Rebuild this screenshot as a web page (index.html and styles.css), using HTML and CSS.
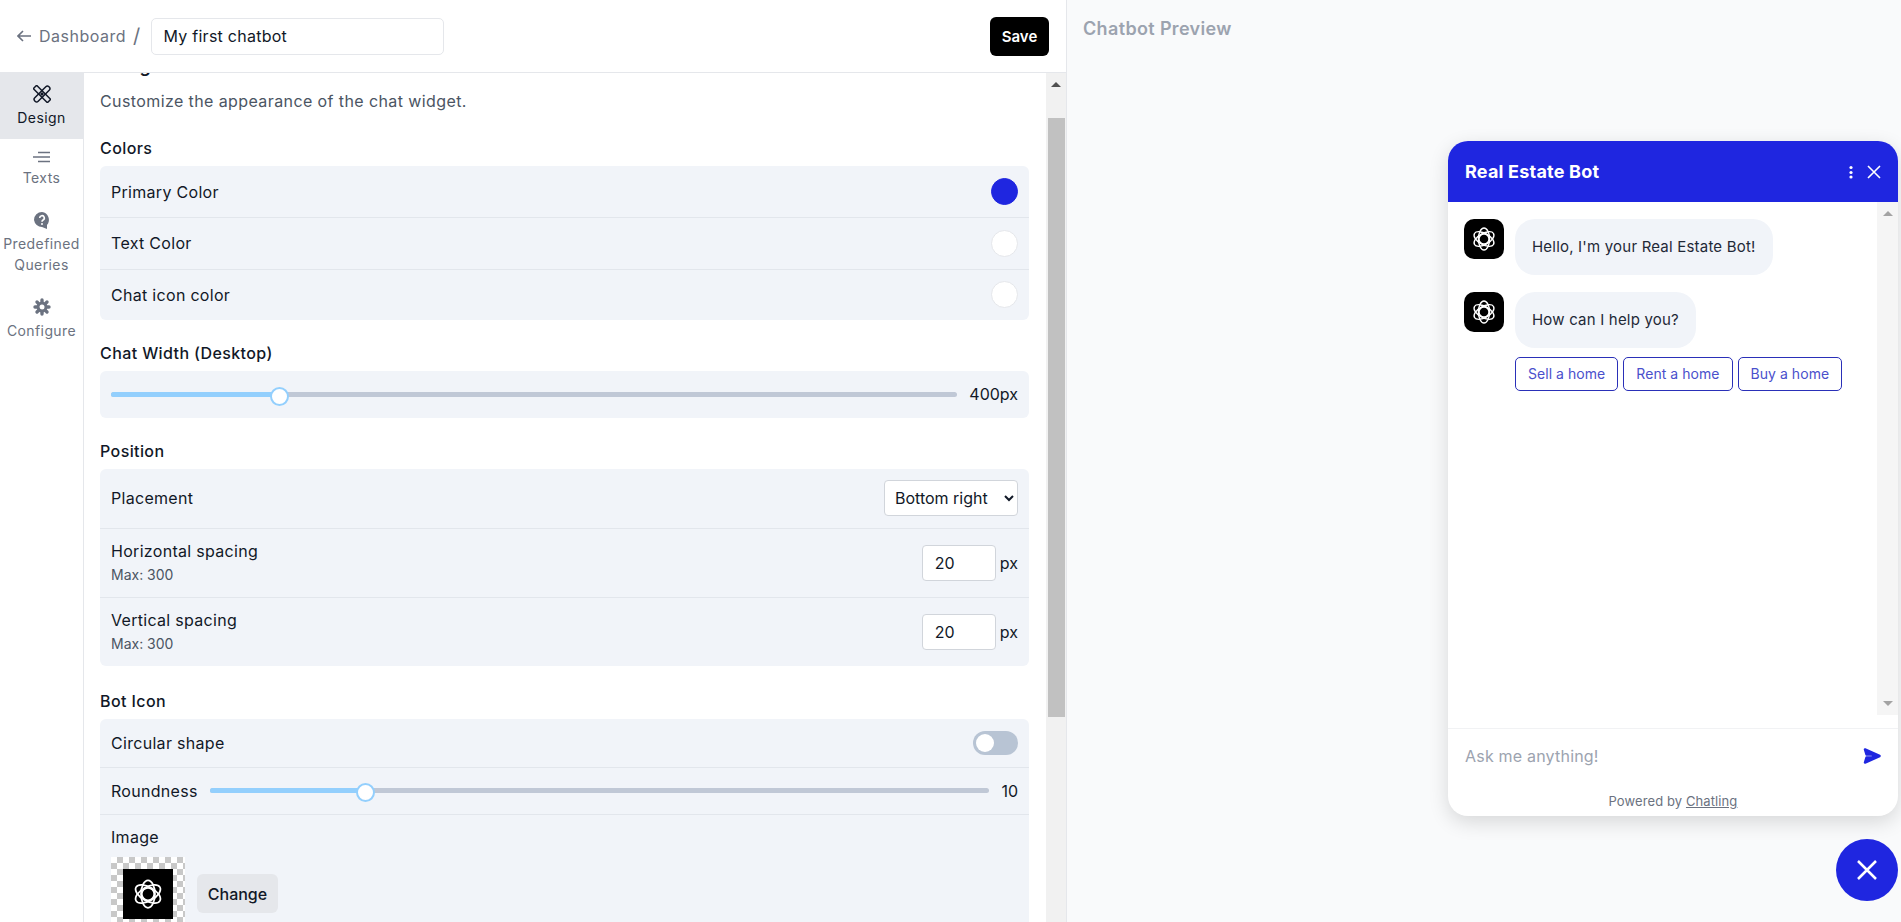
FILE: index.html
```html
<!DOCTYPE html>
<html lang="en">
<head>
  <meta charset="UTF-8">
  <meta name="viewport" content="width=device-width, initial-scale=1.0">
  <title>My first chatbot - Design</title>
  <link rel="stylesheet" href="styles.css">
</head>
<body>
  <svg class="defs" width="0" height="0">
    <symbol id="atom" viewBox="0 0 24 24">
      <g fill="none" stroke="#fff" stroke-width="1.4">
        <circle cx="12" cy="12" r="5"/>
        <ellipse cx="12" cy="12" rx="5.6" ry="11"/>
        <ellipse cx="12" cy="12" rx="5.6" ry="11" transform="rotate(60 12 12)"/>
        <ellipse cx="12" cy="12" rx="5.6" ry="11" transform="rotate(120 12 12)"/>
      </g>
    </symbol>
  </svg>

  <div class="app">
    <div class="editor">
      <header class="topbar">
        <a class="back" href="#">
          <svg width="14" height="12" viewBox="0 0 14 12"><path d="M6 1 1 6l5 5M1 6h13" fill="none" stroke="#6b7280" stroke-width="1.6"/></svg>
          Dashboard
        </a>
        <span class="slash">/</span>
        <input class="name-input" type="text" value="My first chatbot">
        <button class="save">Save</button>
      </header>

      <div class="workspace">
        <nav class="sidenav">
          <a class="nav-item active" href="#">
            <svg width="18" height="18" viewBox="0 0 18 18"><g fill="none" stroke="#111827" stroke-width="1.5" stroke-linejoin="round"><rect x="6.6" y="-1" width="4.8" height="20" rx="2.2" transform="rotate(45 9 9)"/><rect x="6.6" y="-1" width="4.8" height="20" rx="1" transform="rotate(-45 9 9)"/></g><path d="m7 9 2-2 2 2-2 2z" fill="#111827"/></svg>
            <span>Design</span>
          </a>
          <a class="nav-item" href="#">
            <svg width="18" height="12" viewBox="0 0 18 12"><path d="M5 1.5h12M0 6h17M5 10.5h12" fill="none" stroke="#6b7280" stroke-width="1.5"/></svg>
            <span>Texts</span>
          </a>
          <a class="nav-item" href="#">
            <svg width="18" height="18" viewBox="0 0 18 18"><path d="M9 1a8 8 0 0 0-8 8 8 8 0 0 0 8 6.9l5 2.1v-3.900A8 8 0 0 0 9 1z" fill="#6b7280"/><path d="M6.700 7a2.300 2.300 0 1 1 3.400 2c-.8.5-1.100.9-1.100 1.700" fill="none" stroke="#fff" stroke-width="1.600"/><circle cx="9" cy="13" r="1" fill="#fff"/></svg>
            <span>Predefined Queries</span>
          </a>
          <a class="nav-item" href="#">
            <svg width="18" height="18" viewBox="0 0 18 18"><path d="M9 3.500a5.500 5.500 0 1 0 0 11 5.500 5.500 0 0 0 0-11zm0 3a2.500 2.500 0 1 1 0 5 2.500 2.500 0 0 1 0-5z" fill="#6b7280" fill-rule="evenodd"/><g stroke="#6b7280" stroke-width="3.400" stroke-linecap="round"><path d="M9 2v1.500M9 14.500V16M2 9h1.500M14.500 9H16M4 4l1.100 1.100M12.900 12.900 14 14M14 4l-1.100 1.100M5.100 12.900 4 14"/></g></svg>
            <span>Configure</span>
          </a>
        </nav>

        <main class="settings">
          <div class="settings-body">
            <h2 class="page-title">Design</h2>
            <p class="page-desc">Customize the appearance of the chat widget.</p>

            <h3 class="group-title group-gap">Colors</h3>
            <div class="card">
              <div class="row row-color"><span>Primary Color</span><span class="swatch swatch-primary"></span></div>
              <div class="row row-color"><span>Text Color</span><span class="swatch"></span></div>
              <div class="row row-color"><span>Chat icon color</span><span class="swatch"></span></div>
            </div>

            <h3 class="group-title">Chat Width (Desktop)</h3>
            <div class="card">
              <div class="row row-width">
                <div class="slider"><div class="slider-fill"></div></div>
                <span class="slider-value">400px</span>
              </div>
            </div>

            <h3 class="group-title">Position</h3>
            <div class="card">
              <div class="row row-placement">
                <span>Placement</span>
                <select class="select"><option>Bottom right</option></select>
              </div>
              <div class="row row-spacing">
                <div class="label-stack"><span>Horizontal spacing</span><small>Max: 300</small></div>
                <div class="px-field"><input class="num-input" type="text" value="20"><span>px</span></div>
              </div>
              <div class="row row-spacing">
                <div class="label-stack"><span>Vertical spacing</span><small>Max: 300</small></div>
                <div class="px-field"><input class="num-input" type="text" value="20"><span>px</span></div>
              </div>
            </div>

            <h3 class="group-title group-gap">Bot Icon</h3>
            <div class="card">
              <div class="row row-toggle"><span>Circular shape</span><span class="toggle"><span class="toggle-knob"></span></span></div>
              <div class="row row-round">
                <span>Roundness</span>
                <div class="slider"><div class="slider-fill"></div></div>
                <span class="slider-value">10</span>
              </div>
              <div class="row-image">
                <span class="image-label">Image</span>
                <div class="image-line">
                  <div class="checker"><div class="checker-img"><svg width="30" height="30"><use href="#atom"/></svg></div></div>
                  <button class="change">Change</button>
                </div>
              </div>
            </div>
          </div>
        </main>

        <div class="scrollbar">
          <span class="arrow-up"></span>
          <div class="scroll-thumb"></div>
        </div>
      </div>
    </div>

    <aside class="preview">
      <h2 class="preview-title">Chatbot Preview</h2>

      <div class="chat">
        <div class="chat-head">
          <span class="chat-name">Real Estate Bot</span>
          <svg width="4" height="14" viewBox="0 0 4 14"><g fill="#fff"><circle cx="2" cy="2.500" r="1.600"/><circle cx="2" cy="7.500" r="1.600"/><circle cx="2" cy="12" r="1.600"/></g></svg>
          <svg class="chat-close" width="14" height="14" viewBox="0 0 14 14"><path d="m1 1 12 12M13 1 1 13" stroke="#fff" stroke-width="1.600" fill="none"/></svg>
        </div>
        <div class="chat-main">
          <div class="messages">
            <div class="msg">
              <span class="avatar"><svg width="24" height="24"><use href="#atom"/></svg></span>
              <div class="bubble">Hello, I'm your Real Estate Bot!</div>
            </div>
            <div class="msg">
              <span class="avatar"><svg width="24" height="24"><use href="#atom"/></svg></span>
              <div class="bubble">How can I help you?</div>
            </div>
            <div class="quick">
              <button class="quick-btn">Sell a home</button>
              <button class="quick-btn">Rent a home</button>
              <button class="quick-btn">Buy a home</button>
            </div>
          </div>
          <div class="chat-scroll">
            <span class="arrow-up small"></span>
            <span class="arrow-down small"></span>
          </div>
        </div>
        <div class="chat-input">
          <span class="placeholder">Ask me anything!</span>
          <svg width="18" height="18" viewBox="0 0 18 18"><path d="M2 2.500 16.500 9 2 15.500 3.500 10.500H10V7.500H3.500z" fill="#1f26e0" stroke="#1f26e0" stroke-width="2.500" stroke-linejoin="round"/></svg>
        </div>
        <div class="powered">Powered by <a href="#">Chatling</a></div>
      </div>

      <button class="fab">
        <svg width="22" height="22" viewBox="0 0 22 22"><path d="m2 2 18 18M20 2 2 20" stroke="#fff" stroke-width="2.500" fill="none"/></svg>
      </button>
    </aside>
  </div>
</body>
</html>
```

FILE: styles.css
```css
* {
  box-sizing: border-box;
}
html, body {
  margin: 0;
  height: 100%;
}
body {
  font-family: Inter, "Noto Sans", sans-serif;
  font-size: 16px;
  letter-spacing: 0.3px;
  color: #111827;
  background: #fff;
  overflow: hidden;
}
.defs {
  position: absolute;
}
.app {
  display: flex;
  height: 100vh;
}

/* left side */
.editor {
  width: 1067px;
  flex: none;
  display: flex;
  flex-direction: column;
  border-right: 1px solid #e5e7eb;
}
.topbar {
  height: 73px;
  flex: none;
  display: flex;
  align-items: center;
  padding: 0 17px;
  border-bottom: 1px solid #e5e7eb;
}
.back {
  display: flex;
  align-items: center;
  gap: 8px;
  color: #6b7280;
  letter-spacing: 0.5px;
  text-decoration: none;
}
.slash {
  margin: 0 10px 0 7px;
  font-size: 20px;
  color: #6b7280;
}
.name-input {
  width: 293px;
  height: 37px;
  padding: 0 12px;
  border: 1px solid #e5e7eb;
  border-radius: 5px;
  font: inherit;
  letter-spacing: 0.25px;
  color: #111827;
}
.save {
  width: 59px;
  height: 39px;
  margin-left: auto;
  background: #000;
  color: #fff;
  border: 0;
  border-radius: 6px;
  font: inherit;
  font-size: 15px;
  font-weight: 600;
}

.workspace {
  flex: 1;
  display: flex;
  min-height: 0;
}
.sidenav {
  width: 84px;
  flex: none;
  border-right: 1px solid #e5e7eb;
}
.nav-item {
  display: flex;
  flex-direction: column;
  align-items: center;
  gap: 4px;
  padding: 12px 0 11px;
  color: #6b7280;
  font-size: 14px;
  letter-spacing: 0.4px;
  line-height: 21px;
  text-align: center;
  text-decoration: none;
}
.nav-item.active {
  background: #e5e7eb;
  color: #111827;
}

.settings {
  flex: 1;
  min-width: 0;
  overflow: hidden;
}
.settings-body {
  margin-top: -21px;
  padding: 0 17px 0 16px;
}
.page-title {
  margin: 0;
  font-size: 18px;
  font-weight: 600;
  line-height: 28px;
}
.page-desc {
  margin: 9px 0 0;
  color: #4b5563;
  letter-spacing: 0.4px;
  line-height: 24px;
}
.group-title {
  margin: 21px 0 6px;
  font-size: 16px;
  font-weight: 500;
  letter-spacing: 0.4px;
  line-height: 24px;
}
.group-gap {
  margin-top: 23px;
}
.card {
  background: #f1f4f9;
  border-radius: 6px;
}
.row {
  display: flex;
  align-items: center;
  justify-content: space-between;
  padding: 0 11px;
  border-top: 1px solid #e2e6ec;
}
.row:first-child {
  border-top: 0;
}
.row-color { height: 51.3px; }
.row-width { height: 47px; gap: 12px; }
.row-placement { height: 59px; }
.row-spacing { height: 69px; }
.row-toggle { height: 48px; }
.row-round { height: 47px; gap: 12px; }

.swatch {
  width: 27px;
  height: 27px;
  border-radius: 50%;
  background: #fff;
  border: 1px solid #e5e7eb;
}
.swatch-primary {
  background: #1f26e0;
  border-color: #1f26e0;
}

.slider {
  flex: 1;
  height: 5px;
  border-radius: 3px;
  background: #c0c8d6;
}
.slider-fill {
  position: relative;
  width: 20%;
  height: 100%;
  border-radius: 3px;
  background: #93cffd;
}
.slider-fill::after {
  content: "";
  position: absolute;
  right: -9px;
  top: -5px;
  width: 15px;
  height: 15px;
  border-radius: 50%;
  background: #fff;
  border: 2px solid #93cffd;
}
.slider-value {
  letter-spacing: 0;
}

.select {
  width: 134px;
  height: 36px;
  padding: 0 6px;
  background: #fff;
  border: 1px solid #d1d5db;
  border-radius: 4px;
  font: inherit;
  color: #111827;
}
.label-stack {
  display: flex;
  flex-direction: column;
  gap: 5px;
  padding-bottom: 2px;
}
.label-stack small {
  font-size: 14px;
  letter-spacing: 0;
  color: #4b5563;
}
.px-field {
  display: flex;
  align-items: center;
  gap: 4px;
  letter-spacing: 0;
}
.num-input {
  width: 74px;
  height: 36px;
  padding: 0 12px;
  border: 1px solid #d1d5db;
  border-radius: 4px;
  font: inherit;
  color: #111827;
}
.toggle {
  display: flex;
  align-items: center;
  width: 45px;
  height: 24px;
  padding: 3px;
  background: #b8c4d4;
  border-radius: 12px;
}
.toggle-knob {
  width: 18px;
  height: 18px;
  background: #fff;
  border-radius: 50%;
}
.row-image {
  padding: 11px 11px 0;
  height: 120px;
  border-top: 1px solid #e2e6ec;
}
.image-label {
  display: block;
  line-height: 22px;
}
.image-line {
  display: flex;
  align-items: center;
  gap: 12px;
  margin-top: 9px;
}
.checker {
  width: 74px;
  height: 74px;
  padding: 12px;
  background: repeating-conic-gradient(#c8c8c8 0 25%, #fff 0 50%) 0 0 / 12px 12px;
}
.checker-img {
  width: 50px;
  height: 50px;
  background: #000;
  display: flex;
  align-items: center;
  justify-content: center;
}
.change {
  width: 81px;
  height: 39px;
  background: #e5e7eb;
  border: 0;
  border-radius: 6px;
  font: inherit;
  font-weight: 500;
  color: #111827;
}

.scrollbar {
  width: 20px;
  flex: none;
  background: #f1f1f1;
  display: flex;
  flex-direction: column;
  align-items: center;
}
.arrow-up {
  margin-top: 9px;
  border: 4px solid transparent;
  border-top: 0;
  border-left-width: 5px;
  border-right-width: 5px;
  border-bottom: 5px solid #505050;
}
.scroll-thumb {
  width: 17px;
  height: 599px;
  margin-top: 31px;
  background: #c1c1c1;
}
.arrow-up.small {
  margin-top: 0;
  border-bottom-color: #a3a3a3;
}
.arrow-down {
  border: 4px solid transparent;
  border-bottom: 0;
  border-left-width: 5px;
  border-right-width: 5px;
  border-top: 5px solid #a3a3a3;
}

/* right side */
.preview {
  flex: 1;
  position: relative;
  background: #f9fafb;
  padding: 18px 16px;
}
.preview-title {
  margin: 0;
  color: #9ca3af;
  font-size: 18px;
  font-weight: 600;
  letter-spacing: 0.35px;
  line-height: 22px;
}
.chat {
  position: absolute;
  top: 141px;
  right: 3px;
  width: 450px;
  height: 675px;
  display: flex;
  flex-direction: column;
  background: #fff;
  border-radius: 20px;
  box-shadow: 0 6px 20px rgba(0, 0, 0, 0.14);
  overflow: hidden;
}
.chat-head {
  height: 61px;
  flex: none;
  display: flex;
  align-items: center;
  padding: 0 17px;
  gap: 14px;
  background: #1f26e0;
  color: #fff;
}
.chat-name {
  margin-right: auto;
  font-size: 18px;
  font-weight: 700;
  letter-spacing: 0.2px;
}
.chat-main {
  height: 527px;
  flex: none;
  display: flex;
  border-bottom: 1px solid #f1f2f4;
}
.messages {
  flex: 1;
  padding: 17px 16px;
}
.msg {
  display: flex;
  gap: 11px;
  margin-bottom: 17px;
}
.avatar {
  width: 40px;
  height: 40px;
  flex: none;
  background: #000;
  border-radius: 10px;
  display: flex;
  align-items: center;
  justify-content: center;
}
.bubble {
  padding: 16px 17px;
  background: #f1f4f9;
  border-radius: 20px;
  font-size: 15px;
  letter-spacing: 0.2px;
  line-height: 24px;
  color: #1f2937;
}
.quick {
  display: flex;
  gap: 5px;
  margin: -8.5px 0 0 51px;
}
.quick-btn {
  height: 34px;
  padding: 0 12px;
  background: #fff;
  border: 1px solid #2a30b8;
  border-radius: 5px;
  color: #4a50cc;
  font: inherit;
  font-size: 14px;
  letter-spacing: 0.05px;
}
.chat-scroll {
  width: 21px;
  flex: none;
  height: 513px;
  padding: 9px 0;
  background: #f5f5f5;
  display: flex;
  flex-direction: column;
  align-items: center;
  justify-content: space-between;
}
.chat-input {
  height: 54px;
  flex: none;
  display: flex;
  align-items: center;
  justify-content: space-between;
  padding: 0 17px;
  color: #9ca3af;
  letter-spacing: 0.2px;
}
.powered {
  padding-top: 8px;
  line-height: 20px;
  text-align: center;
  color: #6b7280;
  font-size: 13px;
  letter-spacing: 0.1px;
}
.powered a {
  color: #6b7280;
}
.fab {
  position: absolute;
  top: 839px;
  right: 3px;
  width: 62px;
  height: 62px;
  border: 0;
  border-radius: 50%;
  background: #1f26e0;
  display: flex;
  align-items: center;
  justify-content: center;
}
```
